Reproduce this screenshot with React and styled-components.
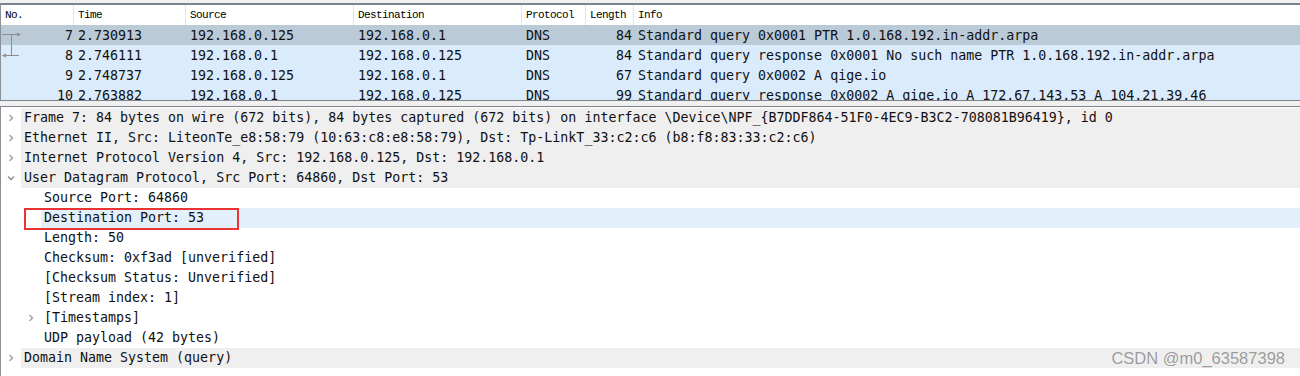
import React from 'react'
import styled, { createGlobalStyle } from 'styled-components'

const packets = [
    { no: 7, time: '2.730913', src: '192.168.0.125', dst: '192.168.0.1', proto: 'DNS', len: 84, info: 'Standard query 0x0001 PTR 1.0.168.192.in-addr.arpa', selected: true, link: 'out' },
    { no: 8, time: '2.746111', src: '192.168.0.1', dst: '192.168.0.125', proto: 'DNS', len: 84, info: 'Standard query response 0x0001 No such name PTR 1.0.168.192.in-addr.arpa', link: 'in' },
    { no: 9, time: '2.748737', src: '192.168.0.125', dst: '192.168.0.1', proto: 'DNS', len: 67, info: 'Standard query 0x0002 A qige.io' },
    { no: 10, time: '2.763882', src: '192.168.0.1', dst: '192.168.0.125', proto: 'DNS', len: 99, info: 'Standard query response 0x0002 A qige.io A 172.67.143.53 A 104.21.39.46' },
]

const tree = [
    { level: 0, arrow: 'closed', text: 'Frame 7: 84 bytes on wire (672 bits), 84 bytes captured (672 bits) on interface \\Device\\NPF_{B7DDF864-51F0-4EC9-B3C2-708081B96419}, id 0' },
    { level: 0, arrow: 'closed', text: 'Ethernet II, Src: LiteonTe_e8:58:79 (10:63:c8:e8:58:79), Dst: Tp-LinkT_33:c2:c6 (b8:f8:83:33:c2:c6)' },
    { level: 0, arrow: 'closed', text: 'Internet Protocol Version 4, Src: 192.168.0.125, Dst: 192.168.0.1' },
    { level: 0, arrow: 'open', text: 'User Datagram Protocol, Src Port: 64860, Dst Port: 53' },
    { level: 1, text: 'Source Port: 64860' },
    { level: 1, text: 'Destination Port: 53', highlight: true },
    { level: 1, text: 'Length: 50' },
    { level: 1, text: 'Checksum: 0xf3ad [unverified]' },
    { level: 1, text: '[Checksum Status: Unverified]' },
    { level: 1, text: '[Stream index: 1]' },
    { level: 1, arrow: 'closed', text: '[Timestamps]' },
    { level: 1, text: 'UDP payload (42 bytes)' },
    { level: 0, arrow: 'closed', text: 'Domain Name System (query)' },
]

const GlobalStyle = createGlobalStyle`
    body {
        margin: 0;
        background: #ffffff;
        overflow: hidden;
    }
`

const Window = styled.div`
    position: relative;
    width: 1300px;
    height: 376px;
    background: #ffffff;
    overflow: hidden;
`

const TopStrip = styled.div`
    height: 3px;
    background: #f0f0f0;
`

const ListPane = styled.div`
    border-top: 2px solid #7d838b;
    border-left: 1px solid #8a9098;
    border-bottom: 1px solid #7d838b;
    background: #ffffff;
`

const Columns = styled.div`
    display: grid;
    grid-template-columns: 73px 112px 168px 168px 64px 48px 1fr;
    height: 20px;
    align-items: center;
    background: ${p => p.$bg || '#ffffff'};
    font-family: 'DejaVu Sans Mono', 'Liberation Mono', monospace;
    font-size: 13.3px;
    color: #101010;
    white-space: nowrap;
`

const HeadCell = styled.div`
    height: 20px;
    line-height: 20px;
    padding-left: 4px;
    border-right: 1px solid #e4e4e4;
    font-family: 'Liberation Mono', 'DejaVu Sans Mono', monospace;
    font-size: 11px;
    letter-spacing: -0.6px;
    color: #000000;
    overflow: hidden;
    &:last-child { border-right: none; }
`

const Cell = styled.div`
    padding: 0 2px 0 4px;
    text-align: ${p => (p.$right ? 'right' : 'left')};
    overflow: hidden;
`

const NoCell = styled.div`
    display: flex;
    align-items: center;
    height: 20px;
    padding-right: 1px;
`

const LinkIcon = styled.svg`
    width: 22px;
    height: 20px;
    flex: none;
`

const NoText = styled.span`
    margin-left: auto;
`

const ListBody = styled.div`
    height: 75px;
    overflow: hidden;
`

const Gap = styled.div`
    height: 5px;
    background: #f0f0f0;
`

const DetailPane = styled.div`
    border-top: 1px solid #7d838b;
    border-left: 1px solid #8a9098;
    padding-top: 1px;
    height: 268px;
    background: #ffffff;
`

const TreeRow = styled.div`
    display: flex;
    align-items: center;
    height: 20px;
    padding-left: ${p => p.$level * 20}px;
    font-family: 'DejaVu Sans Mono', 'Liberation Mono', monospace;
    font-size: 13.3px;
    color: #101010;
    white-space: nowrap;
`

const Toggle = styled.div`
    width: 20px;
    height: 20px;
    flex: none;
    display: flex;
    align-items: center;
    justify-content: center;
`

const Label = styled.div`
    position: relative;
    flex: 1;
    height: 20px;
    line-height: 20px;
    padding-left: 3px;
    background: ${p => (p.$top ? '#efefef' : p.$highlight ? '#e3effa' : 'transparent')};
`

const RedBox = styled.div`
    position: absolute;
    left: -17px;
    top: 0;
    width: 211px;
    height: 18px;
    border: 2px solid #ea3433;
`

const Watermark = styled.div`
    position: absolute;
    right: 15px;
    bottom: 8px;
    font-family: 'Liberation Sans', Arial, sans-serif;
    font-size: 16.5px;
    color: #9a9a9a;
    text-shadow: 0 0 1px #ffffff;
`

function Chevron({ open }) {
    return (
        <svg width="10" height="10" viewBox="0 0 10 10">
            {open
                ? <polyline points="2,3.5 5,6.5 8,3.5" fill="none" stroke="#8c8c8c" strokeWidth="1.4" />
                : <polyline points="3.5,2 6.5,5 3.5,8" fill="none" stroke="#a0a0a0" strokeWidth="1.4" />}
        </svg>
    )
}

function Link({ kind }) {
    if (kind === 'out') {
        return (
            <LinkIcon viewBox="0 0 22 20">
                <line x1="1" y1="9.5" x2="17" y2="9.5" stroke="#8c8c8c" />
                <polygon points="16,7.5 20,9.5 16,11.5" fill="#8c8c8c" />
                <line x1="10.5" y1="9.5" x2="10.5" y2="20" stroke="#8c8c8c" />
            </LinkIcon>
        )
    }
    if (kind === 'in') {
        return (
            <LinkIcon viewBox="0 0 22 20">
                <line x1="10.5" y1="0" x2="10.5" y2="10.5" stroke="#8c8c8c" />
                <line x1="4" y1="10.5" x2="18" y2="10.5" stroke="#8c8c8c" />
                <polygon points="5,8.5 1,10.5 5,12.5" fill="#8c8c8c" />
            </LinkIcon>
        )
    }
    return <LinkIcon viewBox="0 0 22 20" />
}

function App() {
    return (
        <>
            <GlobalStyle />
            <Window>
                <TopStrip />
                <ListPane>
                    <Columns>
                        <HeadCell>No.</HeadCell>
                        <HeadCell>Time</HeadCell>
                        <HeadCell>Source</HeadCell>
                        <HeadCell>Destination</HeadCell>
                        <HeadCell>Protocol</HeadCell>
                        <HeadCell>Length</HeadCell>
                        <HeadCell>Info</HeadCell>
                    </Columns>
                    <ListBody>
                        {packets.map(p => (
                            <Columns key={p.no} $bg={p.selected ? '#bacad7' : '#daebfb'}>
                                <NoCell>
                                    <Link kind={p.link} />
                                    <NoText>{p.no}</NoText>
                                </NoCell>
                                <Cell>{p.time}</Cell>
                                <Cell>{p.src}</Cell>
                                <Cell>{p.dst}</Cell>
                                <Cell>{p.proto}</Cell>
                                <Cell $right>{p.len}</Cell>
                                <Cell>{p.info}</Cell>
                            </Columns>
                        ))}
                    </ListBody>
                </ListPane>
                <Gap />
                <DetailPane>
                    {tree.map((n, i) => (
                        <TreeRow key={i} $level={n.level}>
                            <Toggle>{n.arrow && <Chevron open={n.arrow === 'open'} />}</Toggle>
                            <Label $top={n.level === 0} $highlight={n.highlight}>
                                {n.highlight && <RedBox />}
                                {n.text}
                            </Label>
                        </TreeRow>
                    ))}
                </DetailPane>
                <Watermark>CSDN @m0_63587398</Watermark>
            </Window>
        </>
    )
}

export default App
